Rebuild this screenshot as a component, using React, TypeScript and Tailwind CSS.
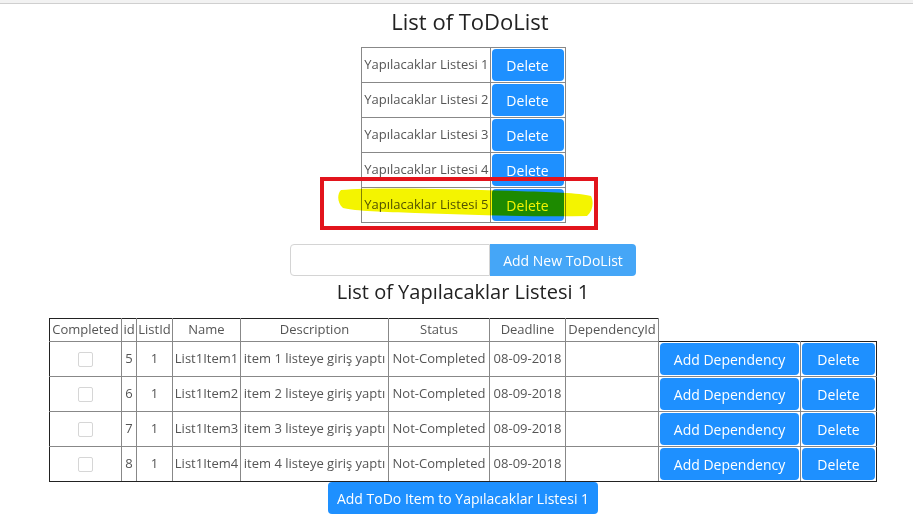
import React from 'react';

const lists = ['Yapılacaklar Listesi 1', 'Yapılacaklar Listesi 2', 'Yapılacaklar Listesi 3', 'Yapılacaklar Listesi 4', 'Yapılacaklar Listesi 5'];

const items = [
  { id: 5, listId: 1, name: 'List1Item1', desc: 'item 1 listeye giriş yaptı' },
  { id: 6, listId: 1, name: 'List1Item2', desc: 'item 2 listeye giriş yaptı' },
  { id: 7, listId: 1, name: 'List1Item3', desc: 'item 3 listeye giriş yaptı' },
  { id: 8, listId: 1, name: 'List1Item4', desc: 'item 4 listeye giriş yaptı' },
];

const font = { fontFamily: '"Open Sans", "Noto Sans", sans-serif' };

const App: React.FC = () => {
  return (
    <div className="w-[913px] h-[530px] bg-white overflow-hidden text-[#555]" style={font}>
      {/* Browser edge */}
      <div className="h-[4px] bg-[#f2f2f2] border-b border-[#cfcfcf]" />

      <div className="pl-[13px] flex flex-col items-center">
        <h3 className="ml-[14px] h-[43px] text-[22px] leading-[35px] text-[#222]">List of ToDoList</h3>

        {/* ToDo lists */}
        <div className="relative">
          <table className="border-collapse border border-[#222] text-[13px]">
            <tbody>
              {lists.map((name) => (
                <tr key={name} className="h-[35px]">
                  <td className="border border-[#888] w-[129px] px-[1px] whitespace-nowrap text-right">{name}</td>
                  <td className="border border-[#888] w-[75px] p-[1px]">
                    <button className="w-[72px] h-[32px] rounded-[4px] text-[14px] text-white bg-[#1e90ff]">Delete</button>
                  </td>
                </tr>
              ))}
            </tbody>
          </table>

          {/* Highlighter stroke */}
          <svg
            className="absolute left-[-26px] top-[137px] mix-blend-multiply pointer-events-none"
            width="260"
            height="40"
            viewBox="0 0 260 40"
          >
            <path
              d="M6 6 C40 3 120 5 180 7 C215 8 245 9 256 12 C259 18 258 27 252 32 C200 33 140 31 80 29 C50 28 20 27 8 24 C2 19 2 10 6 6 Z"
              fill="#f4f400"
            />
          </svg>

          {/* Red annotation box */}
          <div className="absolute left-[-41px] top-[130px] w-[278px] h-[53px] border-[4px] border-[#e2141c] pointer-events-none" />
        </div>

        {/* Add new list */}
        <div className="mt-[21px] flex">
          <input className="w-[200px] h-[32px] border border-[#d4d4d4] rounded-l-[4px] outline-none px-2" />
          <button className="w-[146px] h-[32px] bg-[#45a6f7] text-white text-[14px] rounded-r-[4px]">Add New ToDoList</button>
        </div>

        <h3 className="h-[42px] text-[20px] leading-[32px] text-[#222]">List of Yapılacaklar Listesi 1</h3>

        {/* Items table */}
        <table className="border-collapse table-fixed w-[827px] text-[13px]">
          <colgroup>
            <col className="w-[72px]" />
            <col className="w-[15px]" />
            <col className="w-[36px]" />
            <col className="w-[68px]" />
            <col className="w-[148px]" />
            <col className="w-[101px]" />
            <col className="w-[76px]" />
            <col className="w-[93px]" />
            <col className="w-[142px]" />
            <col className="w-[76px]" />
          </colgroup>
          <thead>
            <tr className="h-[23px]">
              {['Completed', 'id', 'ListId', 'Name', 'Description', 'Status', 'Deadline', 'DependencyId'].map((h, i) => (
                <th
                  key={h}
                  className={`font-normal border border-[#888] border-t-[#222] whitespace-nowrap overflow-hidden p-0 text-center ${i === 0 ? 'border-l-[#222]' : ''}`}
                >
                  {h}
                </th>
              ))}
              <th className="p-0" />
              <th className="p-0" />
            </tr>
          </thead>
          <tbody>
            {items.map((it, r) => {
              const last = r === items.length - 1 ? 'border-b-[#222]' : '';
              return (
                <tr key={it.id} className="h-[35px]">
                  <td className={`border border-[#888] border-l-[#222] text-center p-0 ${last}`}>
                    <span className="inline-block align-middle w-[15px] h-[15px] border border-[#d6d6d6] rounded-[2px] bg-white" />
                  </td>
                  <td className={`border border-[#888] text-center p-0 ${last}`}>{it.id}</td>
                  <td className={`border border-[#888] text-center p-0 ${last}`}>{it.listId}</td>
                  <td className={`border border-[#888] text-center p-0 whitespace-nowrap overflow-hidden ${last}`}>{it.name}</td>
                  <td className={`border border-[#888] text-center p-0 whitespace-nowrap overflow-hidden ${last}`}>{it.desc}</td>
                  <td className={`border border-[#888] text-center p-0 whitespace-nowrap overflow-hidden ${last}`}>Not-Completed</td>
                  <td className={`border border-[#888] text-center p-0 whitespace-nowrap overflow-hidden ${last}`}>08-09-2018</td>
                  <td className={`border border-[#888] p-0 ${last}`} />
                  <td className={`border border-[#888] p-[1px] ${r === 0 ? 'border-t-[#222]' : ''} ${last}`}>
                    <button className="w-full h-[32px] bg-[#1e90ff] text-white text-[14px] rounded-[4px]">Add Dependency</button>
                  </td>
                  <td className={`border border-[#888] border-r-[#222] p-[1px] ${r === 0 ? 'border-t-[#222]' : ''} ${last}`}>
                    <button className="w-full h-[32px] bg-[#1e90ff] text-white text-[14px] rounded-[4px]">Delete</button>
                  </td>
                </tr>
              );
            })}
          </tbody>
        </table>

        <button className="w-[270px] h-[32px] bg-[#1e90ff] text-white text-[14px] rounded-[4px]">
          Add ToDo Item to Yapılacaklar Listesi 1
        </button>
      </div>
    </div>
  );
};

export default App;
